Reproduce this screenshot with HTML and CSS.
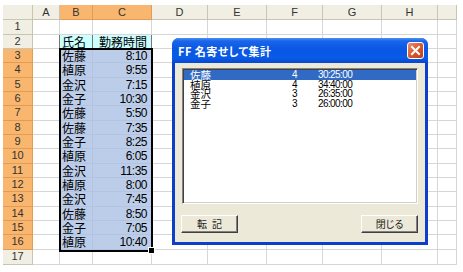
FILE: index.html
```html
<!DOCTYPE html>
<html lang="ja">
<head>
    <meta charset="UTF-8">
    <title>FF 名寄せして集計</title>
    <link rel="stylesheet" href="styles.css">
</head>
<body>
<div class="page">
    <div class="sheet">
        <div class="ch"></div><div class="ch">A</div><div class="ch on">B</div><div class="ch on">C</div><div class="ch">D</div><div class="ch">E</div><div class="ch">F</div><div class="ch">G</div><div class="ch">H</div><div class="ch"></div>

        <div class="rh">1</div><div class="c"></div><div class="c"></div><div class="c"></div><div class="c"></div><div class="c"></div><div class="c"></div><div class="c"></div><div class="c"></div><div class="c"></div>
        <div class="rh">2</div><div class="c edge"></div><div class="c hd nm">氏名</div><div class="c hd mid">勤務時間</div><div class="c"></div><div class="c"></div><div class="c"></div><div class="c"></div><div class="c"></div><div class="c"></div>

        <div class="rh on">3</div><div class="c"></div><div class="c sel nm">佐藤</div><div class="c sel tm">8:10</div><div class="c"></div><div class="c"></div><div class="c"></div><div class="c"></div><div class="c"></div><div class="c"></div>
        <div class="rh on">4</div><div class="c"></div><div class="c sel nm">植原</div><div class="c sel tm">9:55</div><div class="c"></div><div class="c"></div><div class="c"></div><div class="c"></div><div class="c"></div><div class="c"></div>
        <div class="rh on">5</div><div class="c"></div><div class="c sel nm">金沢</div><div class="c sel tm">7:15</div><div class="c"></div><div class="c"></div><div class="c"></div><div class="c"></div><div class="c"></div><div class="c"></div>
        <div class="rh on">6</div><div class="c"></div><div class="c sel nm">金子</div><div class="c sel tm">10:30</div><div class="c"></div><div class="c"></div><div class="c"></div><div class="c"></div><div class="c"></div><div class="c"></div>
        <div class="rh on">7</div><div class="c"></div><div class="c sel nm">佐藤</div><div class="c sel tm">5:50</div><div class="c"></div><div class="c"></div><div class="c"></div><div class="c"></div><div class="c"></div><div class="c"></div>
        <div class="rh on">8</div><div class="c"></div><div class="c sel nm">佐藤</div><div class="c sel tm">7:35</div><div class="c"></div><div class="c"></div><div class="c"></div><div class="c"></div><div class="c"></div><div class="c"></div>
        <div class="rh on">9</div><div class="c"></div><div class="c sel nm">金子</div><div class="c sel tm">8:25</div><div class="c"></div><div class="c"></div><div class="c"></div><div class="c"></div><div class="c"></div><div class="c"></div>
        <div class="rh on">10</div><div class="c"></div><div class="c sel nm">植原</div><div class="c sel tm">6:05</div><div class="c"></div><div class="c"></div><div class="c"></div><div class="c"></div><div class="c"></div><div class="c"></div>
        <div class="rh on">11</div><div class="c"></div><div class="c sel nm">金沢</div><div class="c sel tm">11:35</div><div class="c"></div><div class="c"></div><div class="c"></div><div class="c"></div><div class="c"></div><div class="c"></div>
        <div class="rh on">12</div><div class="c"></div><div class="c sel nm">植原</div><div class="c sel tm">8:00</div><div class="c"></div><div class="c"></div><div class="c"></div><div class="c"></div><div class="c"></div><div class="c"></div>
        <div class="rh on">13</div><div class="c"></div><div class="c sel nm">金沢</div><div class="c sel tm">7:45</div><div class="c"></div><div class="c"></div><div class="c"></div><div class="c"></div><div class="c"></div><div class="c"></div>
        <div class="rh on">14</div><div class="c"></div><div class="c sel nm">佐藤</div><div class="c sel tm">8:50</div><div class="c"></div><div class="c"></div><div class="c"></div><div class="c"></div><div class="c"></div><div class="c"></div>
        <div class="rh on">15</div><div class="c"></div><div class="c sel nm">金子</div><div class="c sel tm">7:05</div><div class="c"></div><div class="c"></div><div class="c"></div><div class="c"></div><div class="c"></div><div class="c"></div>
        <div class="rh on">16</div><div class="c"></div><div class="c sel nm">植原</div><div class="c sel tm">10:40</div><div class="c"></div><div class="c"></div><div class="c"></div><div class="c"></div><div class="c"></div><div class="c"></div>

        <div class="rh">17</div><div class="c"></div><div class="c"></div><div class="c"></div><div class="c"></div><div class="c"></div><div class="c"></div><div class="c"></div><div class="c"></div><div class="c"></div>

        <!-- selection B3:C16 -->
        <div class="range"></div>
        <div class="handle"></div>
    </div>

    <div class="dialog">
        <div class="titlebar">
            <span class="title">FF 名寄せして集計</span>
            <span class="close">
                <svg width="11" height="11" viewBox="0 0 11 11"><path d="M2 2 L9 9 M9 2 L2 9" stroke="#fff" stroke-width="2" stroke-linecap="square"/></svg>
            </span>
        </div>
        <div class="dlg-body">
            <div class="list">
                <div class="item active"><span class="jp">佐藤</span><span>4</span><span class="time">30:25:00</span></div>
                <div class="item"><span class="jp">植原</span><span>4</span><span class="time">34:40:00</span></div>
                <div class="item"><span class="jp">金沢</span><span>3</span><span class="time">26:35:00</span></div>
                <div class="item"><span class="jp">金子</span><span>3</span><span class="time">26:00:00</span></div>
            </div>
            <div class="buttons">
                <div class="btn">転 記</div>
                <div class="btn">閉じる</div>
            </div>
        </div>
    </div>
</div>
</body>
</html>
```

FILE: styles.css
```css
body {
    margin: 0;
    background: #fff;
    font-family: "Liberation Sans", Arial, sans-serif;
}
.page {
    position: relative;
    width: 463px;
    height: 272px;
    overflow: hidden;
}

/* spreadsheet */
.sheet {
    position: relative;
    display: grid;
    grid-template-columns: 30px 27px 33px 59px 56px 59px 56px 59px 56px 19px;
    grid-template-rows: 15px 15px 14px 14px 15px 14px 14px 15px 14px 14px 15px 14px 14px 15px 14px 14px 15px 15px;
    width: 454px;
    height: 260px;
    margin: 5px 0 0 3px;
    overflow: hidden;
}
.sheet > div {
    box-sizing: border-box;
    border-right: 1px solid #d6d6d6;
    border-bottom: 1px solid #d6d6d6;
    white-space: nowrap;
}
.sheet > .ch,
.sheet > .rh {
    background: #f1efe4;
    color: #333;
    font-size: 11px;
    text-align: center;
    border-color: #c9c5b5;
}
.sheet > .ch {
    line-height: 14px;
}
.sheet > .rh {
    line-height: 13px;
}
.sheet > .on {
    background: #f8b66f;
    border-color: #e29c55;
}
.sheet > .edge {
    border-right-color: #777;
}
.sheet > .hd {
    background: #ccffff;
    border-right-color: #777;
    font-family: "Noto Sans CJK JP", sans-serif;
    font-size: 12px;
    line-height: 13px;
}
.sheet > .sel {
    background: #bccde9;
    border-color: #b3c4e2;
}
.nm {
    padding-left: 2px;
    font-family: "Noto Sans CJK JP", sans-serif;
    font-size: 12px;
    line-height: 13px;
}
.mid {
    text-align: center;
    padding-left: 2px;
}
.tm {
    padding-right: 4px;
    text-align: right;
    font-size: 12px;
    letter-spacing: -0.5px;
    line-height: 14px;
}
.sheet > .range {
    position: absolute;
    left: 56px;
    top: 43px;
    width: 94px;
    height: 204px;
    border: 2px solid #000;
}
.sheet > .handle {
    position: absolute;
    left: 145px;
    top: 242px;
    width: 7px;
    height: 7px;
    background: #000;
    border: 1px solid #fff;
}

/* dialog */
.dialog {
    position: absolute;
    left: 172px;
    top: 38px;
    width: 256px;
    height: 207px;
    display: flex;
    flex-direction: column;
    background: #0d3fcb;
    border-radius: 7px 7px 0 0;
}
.titlebar {
    height: 25px;
    display: flex;
    align-items: center;
    justify-content: space-between;
    padding: 0 4px 0 6px;
    border-radius: 7px 7px 0 0;
    background: linear-gradient(to bottom, #4d90f4 0, #1a66ea 3px, #0957e3 45%, #0a5ae8 80%, #0747cf 100%);
}
.title {
    color: #fff;
    font-family: "Noto Sans CJK JP", sans-serif;
    font-feature-settings: "palt";
    font-weight: bold;
    font-size: 11px;
    letter-spacing: 0.5px;
}
.close {
    width: 17px;
    height: 17px;
    box-sizing: border-box;
    display: flex;
    align-items: center;
    justify-content: center;
    border: 1px solid #fff;
    border-radius: 3px;
    background: linear-gradient(135deg, #ea8f72 0, #d9582f 50%, #c13e18 100%);
}
.dlg-body {
    flex: 1;
    display: flex;
    flex-direction: column;
    margin: 0 3px 3px;
    padding: 5px 7px 9px;
    background: #ece9d8;
}
.list {
    height: 136px;
    box-sizing: border-box;
    padding: 1px;
    background: #fff;
    border: 1px solid;
    border-color: #848284 #fff #fff #848284;
    box-shadow: inset 1px 1px #404040, inset -1px -1px #d4d0c8;
    font-size: 10px;
}
.item {
    display: grid;
    grid-template-columns: 102px 26px 1fr;
    height: 9.7px;
    line-height: 9.7px;
    padding-left: 6px;
    color: #000;
}
.item.active {
    background: #316ac5;
    color: #fff;
}
.jp {
    font-family: "Noto Sans CJK JP", sans-serif;
    font-size: 10.5px;
}
.time {
    letter-spacing: -0.6px;
}
.buttons {
    display: flex;
    justify-content: space-between;
    margin: 11px 0 0 -1px;
}
.btn {
    width: 57px;
    height: 18px;
    box-sizing: border-box;
    border: 1px solid;
    border-color: #fff #404040 #404040 #fff;
    box-shadow: inset -1px -1px #808080;
    background: #ece9d8;
    font-family: "Noto Sans CJK JP", sans-serif;
    font-feature-settings: "palt";
    font-size: 10px;
    line-height: 15px;
    text-align: center;
    color: #222;
    word-spacing: 3px;
}
```
